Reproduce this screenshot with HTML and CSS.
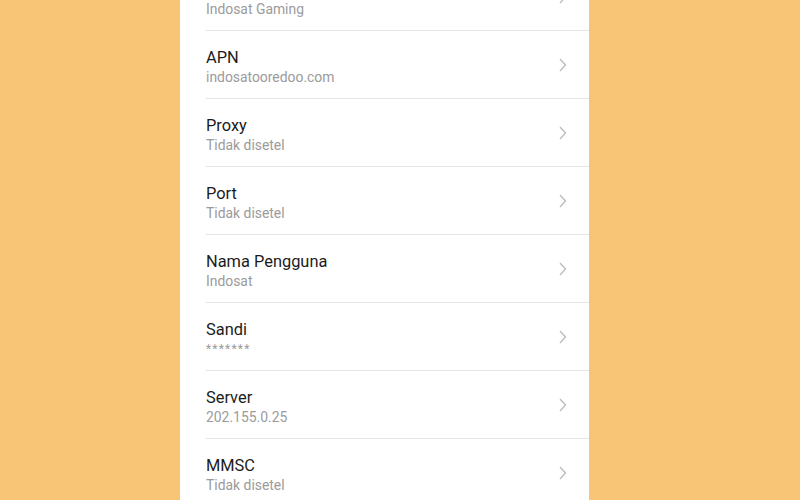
FILE: index.html
```html
<!DOCTYPE html>
<html lang="id">
<head>
    <meta charset="UTF-8">
    <meta name="viewport" content="width=device-width, initial-scale=1.0">
    <title>Edit titik akses</title>
    <link rel="stylesheet" href="styles.css">
</head>
<body>
    <!-- Panel pengaturan APN -->
    <div class="panel">
        <div class="item">
            <div class="text">
                <div class="title">Nama</div>
                <div class="value">Indosat Gaming</div>
            </div>
            <svg class="chevron" width="8" height="14" viewBox="0 0 8 14"><polyline points="1,1 6.5,7 1,13"/></svg>
        </div>
        <div class="item">
            <div class="text">
                <div class="title">APN</div>
                <div class="value">indosatooredoo.com</div>
            </div>
            <svg class="chevron" width="8" height="14" viewBox="0 0 8 14"><polyline points="1,1 6.5,7 1,13"/></svg>
        </div>
        <div class="item">
            <div class="text">
                <div class="title">Proxy</div>
                <div class="value">Tidak disetel</div>
            </div>
            <svg class="chevron" width="8" height="14" viewBox="0 0 8 14"><polyline points="1,1 6.5,7 1,13"/></svg>
        </div>
        <div class="item">
            <div class="text">
                <div class="title">Port</div>
                <div class="value">Tidak disetel</div>
            </div>
            <svg class="chevron" width="8" height="14" viewBox="0 0 8 14"><polyline points="1,1 6.5,7 1,13"/></svg>
        </div>
        <div class="item">
            <div class="text">
                <div class="title">Nama Pengguna</div>
                <div class="value">Indosat</div>
            </div>
            <svg class="chevron" width="8" height="14" viewBox="0 0 8 14"><polyline points="1,1 6.5,7 1,13"/></svg>
        </div>
        <div class="item">
            <div class="text">
                <div class="title">Sandi</div>
                <div class="value password">*******</div>
            </div>
            <svg class="chevron" width="8" height="14" viewBox="0 0 8 14"><polyline points="1,1 6.5,7 1,13"/></svg>
        </div>
        <div class="item">
            <div class="text">
                <div class="title">Server</div>
                <div class="value">202.155.0.25</div>
            </div>
            <svg class="chevron" width="8" height="14" viewBox="0 0 8 14"><polyline points="1,1 6.5,7 1,13"/></svg>
        </div>
        <div class="item">
            <div class="text">
                <div class="title">MMSC</div>
                <div class="value">Tidak disetel</div>
            </div>
            <svg class="chevron" width="8" height="14" viewBox="0 0 8 14"><polyline points="1,1 6.5,7 1,13"/></svg>
        </div>
    </div>
</body>
</html>
```

FILE: styles.css
```css
body {
    margin: 0;
    padding: 0 0 0 180px;
    height: 500px;
    overflow: hidden;
    background-color: #f8c576;
    font-family: Roboto, 'Noto Sans', sans-serif;
}

.panel {
    width: 409px;
    margin-top: -37px; /* la primera fila queda cortada arriba */
    background: #ffffff;
}

.item {
    height: 67px;
    padding: 0 22px 0 26px;
    display: flex;
    align-items: flex-start;
    position: relative;
}

/* Separador que empieza alineado con el texto */
.item + .item::before {
    content: '';
    position: absolute;
    top: -1px;
    left: 26px;
    right: 0;
    height: 1px;
    background: #e4e4e4;
}

.item + .item {
    margin-top: 1px;
}

.text {
    flex: 1;
    padding-top: 17px;
}

.title {
    font-size: 16.4px;
    line-height: 20px;
    color: #1c1c1c;
}

.value {
    font-size: 13.9px;
    line-height: 18px;
    color: #9b9b9b;
}

.value.password {
    font-size: 12px;
    letter-spacing: 1.2px;
}

.chevron {
    margin-top: 27px;
    fill: none;
    stroke: #bdbdbd;
    stroke-width: 1.4;
}
```
